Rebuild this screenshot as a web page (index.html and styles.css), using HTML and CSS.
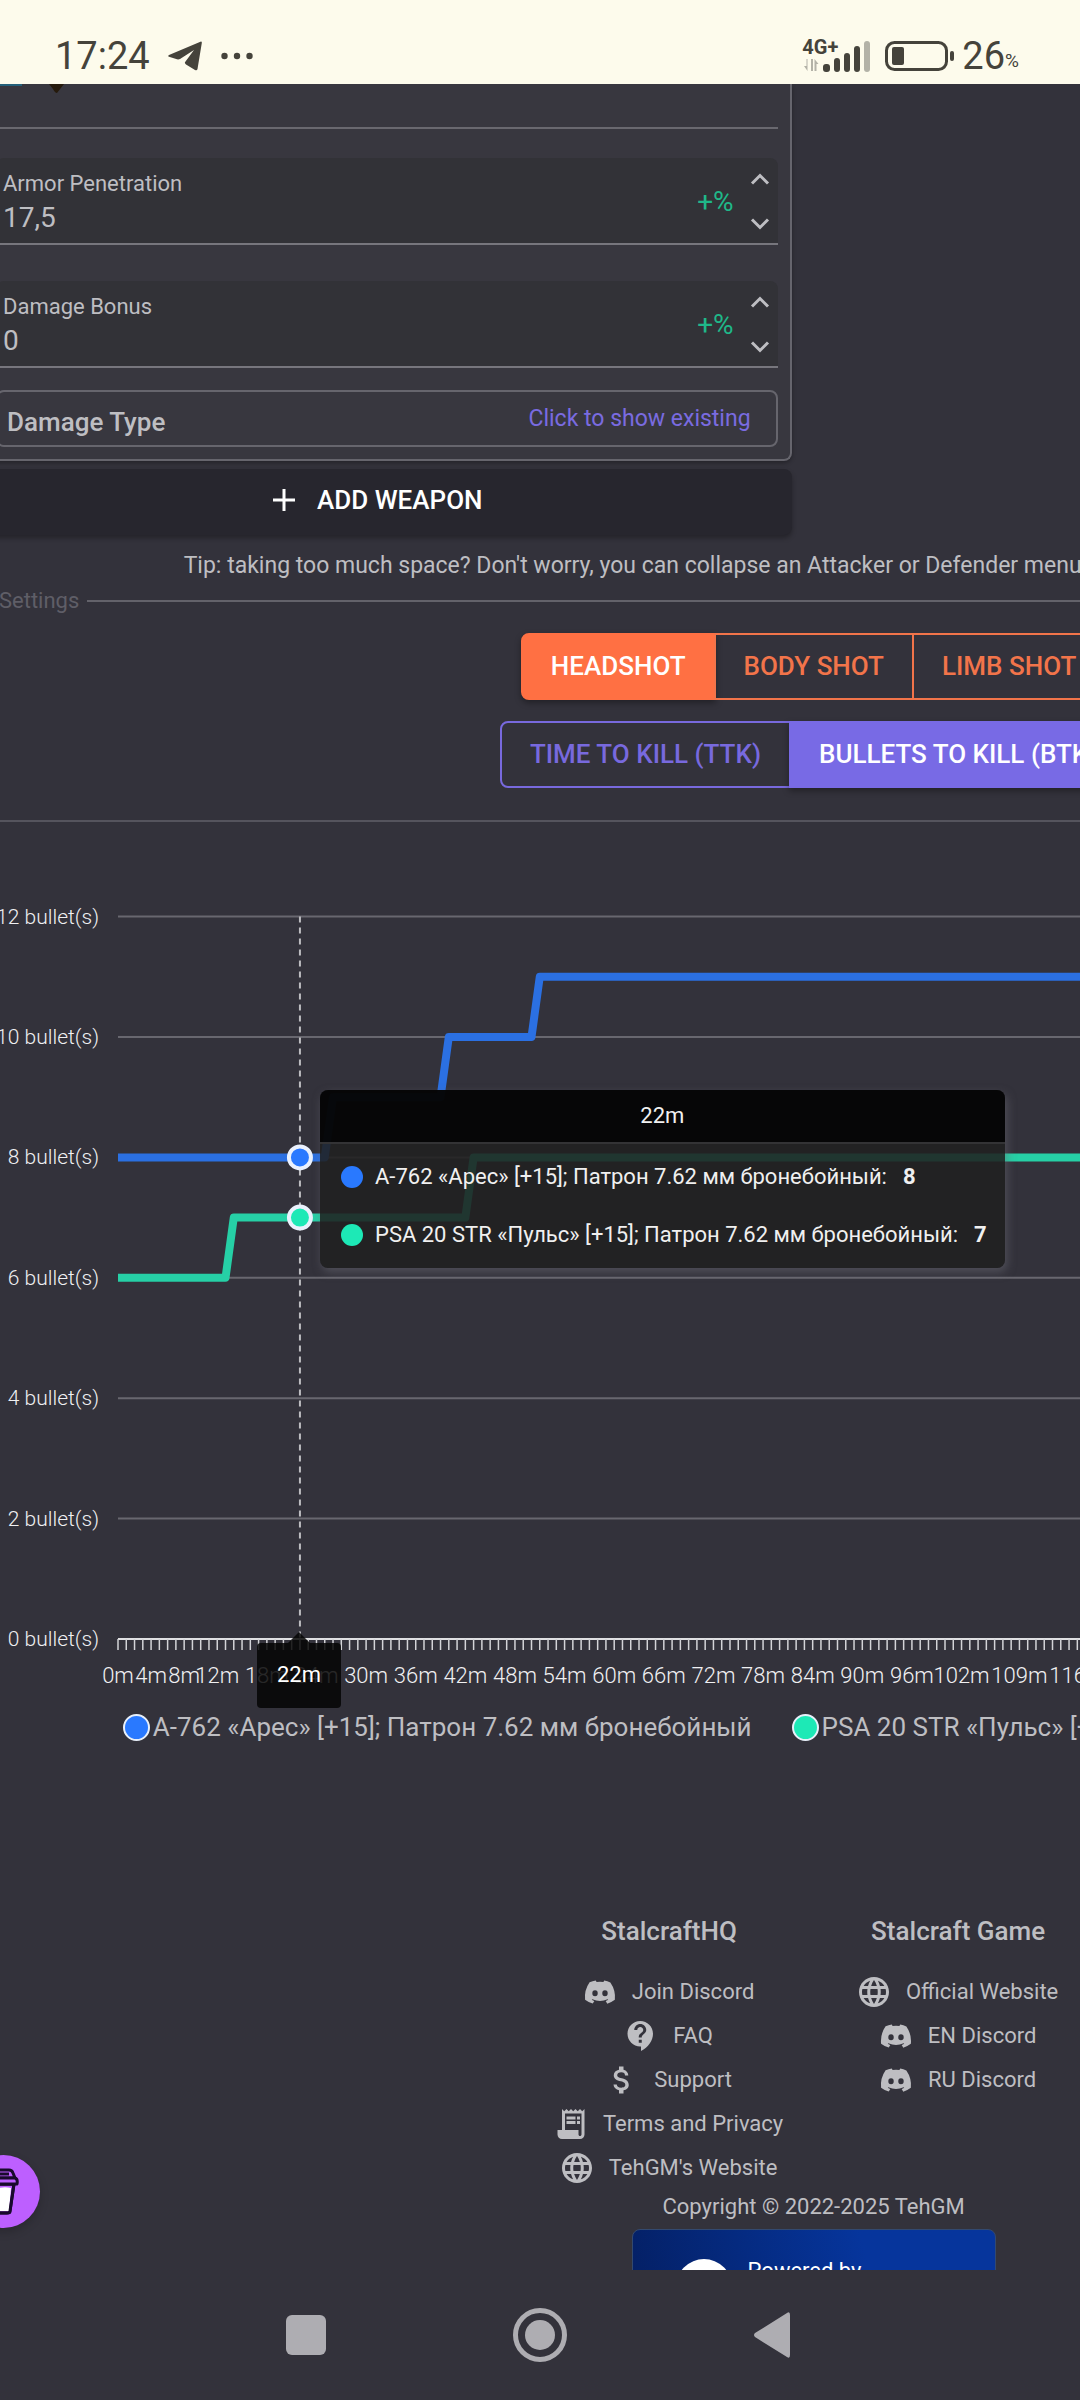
FILE: index.html
```
<!DOCTYPE html>
<html lang="en">
  <head>
    <meta charset="UTF-8">
    <meta name="viewport" content="width=device-width, initial-scale=1.0">
    <title>StalcraftHQ - Weapon Calculator</title>
    <link rel="stylesheet" href="styles.css">
  </head>
  <body>
    <!-- icon sprites -->
    <svg width="0" height="0" class="sprites">
      <symbol id="discord" viewBox="0 0 24 24"><path d="M14.82 4.26a10.14 10.14 0 0 0-.53 1.1 14.66 14.66 0 0 0-4.58 0 10.14 10.14 0 0 0-.53-1.1 16 16 0 0 0-4.13 1.3 17.33 17.33 0 0 0-3 11.59 16.6 16.6 0 0 0 5.07 2.59A12.89 12.89 0 0 0 8.23 18a9.65 9.65 0 0 1-1.71-.83 3.39 3.39 0 0 0 .42-.33 11.66 11.66 0 0 0 10.12 0q.21.18.42.33a10.84 10.84 0 0 1-1.71.84 12.41 12.41 0 0 0 1.08 1.78 16.44 16.44 0 0 0 5.06-2.59 17.22 17.22 0 0 0-3-11.59 16.09 16.09 0 0 0-4.09-1.35zM8.68 14.81a1.94 1.94 0 0 1-1.8-2 1.93 1.93 0 0 1 1.8-2 1.93 1.93 0 0 1 1.8 2 1.93 1.93 0 0 1-1.8 2zm6.64 0a1.94 1.94 0 0 1-1.8-2 1.93 1.93 0 0 1 1.8-2 1.92 1.92 0 0 1 1.8 2 1.92 1.92 0 0 1-1.8 2z"/></symbol>
      <symbol id="globe" viewBox="0 0 24 24"><path d="M11.99 2C6.47 2 2 6.48 2 12s4.47 10 9.99 10C17.52 22 22 17.52 22 12S17.52 2 11.99 2zm6.93 6h-2.95c-.32-1.25-.78-2.45-1.38-3.56 1.84.63 3.37 1.91 4.33 3.56zM12 4.04c.83 1.2 1.48 2.53 1.91 3.96h-3.82c.43-1.43 1.08-2.76 1.91-3.96zM4.26 14C4.1 13.36 4 12.69 4 12s.1-1.36.26-2h3.38c-.08.66-.14 1.32-.14 2s.06 1.34.14 2H4.26zm.82 2h2.95c.32 1.25.78 2.45 1.38 3.56-1.84-.63-3.37-1.9-4.33-3.56zm2.95-8H5.08c.96-1.66 2.49-2.93 4.33-3.56C8.81 5.55 8.35 6.75 8.03 8zM12 19.96c-.83-1.2-1.48-2.53-1.91-3.96h3.82c-.43 1.43-1.08 2.76-1.91 3.96zM14.34 14H9.66c-.09-.66-.16-1.32-.16-2s.07-1.35.16-2h4.68c.09.65.16 1.32.16 2s-.07 1.34-.16 2zm.25 5.56c.6-1.11 1.06-2.31 1.38-3.56h2.95c-.96 1.65-2.49 2.93-4.33 3.56zM16.36 14c.08-.66.14-1.32.14-2s-.06-1.34-.14-2h3.38c.16.64.26 1.31.26 2s-.1 1.36-.26 2h-3.38z"/></symbol>
      <symbol id="faq" viewBox="0 0 24 24"><path d="M11.5 2C6.81 2 3 5.81 3 10.5S6.81 19 11.5 19h.5v3c4.86-2.34 8-7 8-11.5C20 5.81 16.19 2 11.5 2zm1 14.5h-2v-2h2v2zm0-3.5h-2c0-3.25 3-3 3-5 0-1.1-.9-2-2-2s-2 .9-2 2h-2c0-2.21 1.79-4 4-4s4 1.79 4 4c0 2.5-3 2.75-3 5z"/></symbol>
      <symbol id="money" viewBox="0 0 24 24"><path d="M11.8 10.9c-2.27-.59-3-1.2-3-2.15 0-1.09 1.01-1.85 2.7-1.85 1.78 0 2.44.85 2.5 2.1h2.21c-.07-1.72-1.12-3.3-3.21-3.81V3h-3v2.16c-1.94.42-3.5 1.68-3.5 3.61 0 2.31 1.91 3.46 4.7 4.13 2.5.6 3 1.48 3 2.41 0 .69-.49 1.79-2.7 1.79-2.06 0-2.87-.92-2.98-2.1h-2.2c.12 2.19 1.76 3.42 3.68 3.83V21h3v-2.15c1.95-.37 3.5-1.5 3.5-3.55 0-2.84-2.43-3.81-4.7-4.4z"/></symbol>
      <symbol id="receipt" viewBox="0 0 24 24"><path d="M19.5 3.5L18 2l-1.5 1.5L15 2l-1.5 1.5L12 2l-1.5 1.5L9 2 7.5 3.5 6 2v14H3v3c0 1.66 1.34 3 3 3h12c1.66 0 3-1.34 3-3V2l-1.5 1.5zM19 19c0 .55-.45 1-1 1s-1-.45-1-1v-3H8V5h11v14zM9 7h6v2H9zM16 7h2v2h-2zM9 10h6v2H9zM16 10h2v2h-2z"/></symbol>
      <symbol id="up" viewBox="0 0 20 12"><path d="M2 10.500L10 2.500L18 10.500" fill="none" stroke="currentColor" stroke-width="3"/></symbol>
      <symbol id="down" viewBox="0 0 20 12"><path d="M2 1.500L10 9.500L18 1.500" fill="none" stroke="currentColor" stroke-width="3"/></symbol>
    </svg>

    <!-- phone status bar -->
    <header class="statusbar">
      <span class="clock">17:24</span>
      <svg class="plane" width="34" height="30" viewBox="0 0 34 30"><path d="M33 0.500Q34 0.500 33.800 2L29.500 28Q29 30 27 29L18 23.500Q16 22 17.500 20.500L26 9L12 18Q10.500 18.700 9 18.300L1 15.700Q-0.500 15 1 14Z"/></svg>
      <svg class="dots" width="32" height="8" viewBox="0 0 32 8"><circle cx="3.500" cy="4" r="3.200"/><circle cx="16" cy="4" r="3.200"/><circle cx="28.500" cy="4" r="3.200"/></svg>
      <div class="signal">
        <span class="net">4G+</span>
        <svg width="68" height="34" viewBox="0 0 68 34">
          <g fill="#b3b2a7"><path d="M5.500 20v12L2 27h2.500v-7zM9 20h2v12h-2zM12.500 32V20l4 5h-2v7z"/><rect x="62" y="2" width="6" height="31" rx="3"/></g>
          <rect x="21" y="25" width="7" height="8" rx="3"/><rect x="32" y="19" width="6" height="14" rx="3"/><rect x="42" y="14" width="6" height="19" rx="3"/><rect x="52" y="7" width="6" height="26" rx="3"/>
        </svg>
      </div>
      <svg class="battery" width="70" height="30" viewBox="0 0 70 30"><rect x="1.500" y="1.500" width="60" height="27" rx="8" fill="none" stroke="#45433b" stroke-width="3"/><rect x="7" y="6" width="12" height="18" rx="2"/><rect x="65" y="10" width="4" height="10" rx="2"/></svg>
      <span class="clock">26</span><span class="percent">%</span>
    </header>

    <main class="viewport">
      <div class="page">
        <section class="columns">
          <div class="attacker">
            <div class="card">
              <div class="ammo">
                <svg width="80" height="10" viewBox="0 0 80 10"><path d="M0 0H26V2H0z" fill="#24607a"/><path d="M53 0H68L61 9Q59 9 57 5z" fill="#261a0c"/></svg>
              </div>
              <div class="field">
                <div class="field-text">
                  <label for="pen">Armor Penetration</label>
                  <input type="text" id="pen" value="17,5">
                </div>
                <span class="suffix">+%</span>
                <div class="spin">
                  <button aria-label="Increase"><svg width="20" height="12"><use href="#up"/></svg></button>
                  <button aria-label="Decrease"><svg width="20" height="12"><use href="#down"/></svg></button>
                </div>
              </div>
              <div class="field">
                <div class="field-text">
                  <label for="bonus">Damage Bonus</label>
                  <input type="text" id="bonus" value="0">
                </div>
                <span class="suffix">+%</span>
                <div class="spin">
                  <button aria-label="Increase"><svg width="20" height="12"><use href="#up"/></svg></button>
                  <button aria-label="Decrease"><svg width="20" height="12"><use href="#down"/></svg></button>
                </div>
              </div>
              <div class="damage-type">
                <span class="damage-title">Damage Type</span>
                <a href="#existing">Click to show existing</a>
              </div>
            </div>
            <button class="add">
              <svg width="22" height="22" viewBox="0 0 22 22"><path d="M11 0V22M0 11H22" stroke="#fff" stroke-width="3"/></svg>
              ADD WEAPON
            </button>
          </div>
        </section>

        <p class="tip">Tip: taking too much space? Don't worry, you can collapse an Attacker or Defender menu by clicking on the arrow in its label!</p>
        <div class="settings-title"><span>Settings</span></div>

        <div class="toggle orange">
          <button class="active">HEADSHOT</button>
          <button>BODY SHOT</button>
          <button>LIMB SHOT</button>
        </div>
        <div class="toggle purple">
          <button>TIME TO KILL (TTK)</button>
          <button class="active">BULLETS TO KILL (BTK)</button>
        </div>

        <hr class="divider">

        <div class="chart">
          <svg id="plot" width="100%" height="889"></svg>
          <div class="axis-pointer">22m</div>
          <div class="tooltip">
            <div class="tooltip-head">22m</div>
            <div class="tooltip-row"><i class="dot blue"></i>А-762 «Арес» [+15]; Патрон 7.62 мм бронебойный: <b>8</b></div>
            <div class="tooltip-row"><i class="dot green"></i>PSA 20 STR «Пульс» [+15]; Патрон 7.62 мм бронебойный: <b>7</b></div>
          </div>
        </div>
        <ul class="legend">
          <li><i class="dot blue"></i>А-762 «Арес» [+15]; Патрон 7.62 мм бронебойный</li>
          <li><i class="dot green"></i>PSA 20 STR «Пульс» [+15]; Патрон 7.62 мм бронебойный</li>
        </ul>

        <footer class="footer">
          <div class="links">
            <div class="links-col">
              <h3>StalcraftHQ</h3>
              <a href="#"><svg class="icon"><use href="#discord"/></svg>Join Discord</a>
              <a href="#"><svg class="icon"><use href="#faq"/></svg>FAQ</a>
              <a href="#"><svg class="icon"><use href="#money"/></svg>Support</a>
              <a href="#"><svg class="icon"><use href="#receipt"/></svg>Terms and Privacy</a>
              <a href="#"><svg class="icon"><use href="#globe"/></svg>TehGM's Website</a>
            </div>
            <div class="links-col">
              <h3>Stalcraft Game</h3>
              <a href="#"><svg class="icon"><use href="#globe"/></svg>Official Website</a>
              <a href="#"><svg class="icon"><use href="#discord"/></svg>EN Discord</a>
              <a href="#"><svg class="icon"><use href="#discord"/></svg>RU Discord</a>
            </div>
          </div>
          <p class="copyright">Copyright © 2022-2025 TehGM</p>
          <div class="powered">
            <svg width="56" height="56" viewBox="0 0 56 56"><circle cx="28" cy="28" r="28" fill="#fff"/><path d="M25 13Q28 10 31 13V30H25z" fill="#23395d"/></svg>
            <span>Powered by</span>
          </div>
        </footer>
      </div>

      <button class="coffee" aria-label="Buy me a coffee">
        <svg width="46" height="48" viewBox="0 0 46 48" stroke="#180a2c" stroke-width="3" stroke-linejoin="round">
          <path d="M8 16L12 43Q12 45 15 45H31Q34 45 34 43L38 16z" fill="#bd5fff"/>
          <path d="M10 26Q23 17 35 20L33 43H13z" fill="#fff" stroke="none"/>
          <path d="M8 16L12 43Q12 45 15 45H31Q34 45 34 43L38 16z" fill="none"/>
          <path d="M7 10L9 4Q10 2 12 2H33Q36 2 37 5L39 10z" fill="#bd5fff"/>
          <path d="M5 10H39Q42 11 41 16H5z" fill="#bd5fff"/>
          <path d="M14 6H33" />
        </svg>
      </button>
    </main>

    <nav class="navbar">
      <button aria-label="Recent"><svg width="40" height="40" viewBox="0 0 40 40"><rect width="40" height="40" rx="6"/></svg></button>
      <button aria-label="Home"><svg width="54" height="54" viewBox="0 0 54 54"><circle cx="27" cy="27" r="24.500" fill="none" stroke="#aeadb2" stroke-width="5"/><circle cx="27" cy="27" r="15"/></svg></button>
      <button aria-label="Back"><svg width="38" height="46" viewBox="0 0 38 46"><path d="M34 1Q37 -1 37 3V43Q37 47 34 45L2 25Q0 23 2 21z"/></svg></button>
    </nav>

    <script src="script.js"></script>
  </body>
</html>
```

FILE: styles.css
```
* {
  box-sizing: border-box;
}
body {
  margin: 0;
  height: 100vh;
  display: flex;
  flex-direction: column;
  overflow: hidden;
  background-color: #33323b;
  color: #bebec2;
  font-family: Roboto, "Liberation Sans", sans-serif;
  font-size: 22px;
  line-height: 32px;
}
button, input {
  font: inherit;
  color: inherit;
  background: none;
  border: 0;
  padding: 0;
  margin: 0;
}
button {
  cursor: pointer;
}
a {
  color: inherit;
  text-decoration: none;
}
svg {
  display: block;
  fill: currentColor;
}
.sprites {
  position: absolute;
}

/* status bar */
.statusbar {
  flex: none;
  height: 84px;
  padding: 27px 61px 0 55px;
  display: flex;
  align-items: center;
  background-color: #fdfbec;
  color: #45433b;
}
.clock {
  font-size: 38px;
}
.plane {
  margin-left: 18px;
}
.dots {
  margin-left: 19px;
}
.signal {
  position: relative;
  margin-left: auto;
}
.net {
  position: absolute;
  top: -8px;
  left: 0;
  font-size: 20px;
  font-weight: 700;
}
.battery {
  margin: 0 7px 0 15px;
}
.percent {
  font-size: 19px;
  padding-top: 10px;
}

/* scrolled page */
.viewport {
  flex: 1;
  min-height: 0;
  position: relative;
  overflow: hidden;
}
.page {
  width: 154%;
  margin-left: -18px;
}
.columns {
  display: grid;
  grid-template-columns: 1fr 1fr;
  gap: 44px;
}
.card {
  border: 2px solid #66656d;
  border-top: 0;
  border-radius: 0 0 8px 8px;
  padding: 0 12px 12px;
  background-color: #38373f;
  box-shadow: 0 2px 4px rgba(0, 0, 0, 0.3);
}
.ammo {
  height: 45px;
  border-bottom: 2px solid #69686f;
}
.field {
  display: flex;
  height: 87px;
  margin-top: 29px;
  padding: 0 8px 0 7px;
  background-color: #323237;
  border-bottom: 2px solid #77767d;
  border-radius: 8px 8px 0 0;
}
.field + .field {
  margin-top: 36px;
}
.field-text {
  flex: 1;
  padding-top: 10px;
}
.field-text label {
  display: block;
}
.field-text input {
  display: block;
  width: 100%;
  height: 34px;
  font-size: 28px;
}
.suffix {
  padding: 28px 16px 0 0;
  color: #1fb889;
  font-size: 28px;
}
.spin {
  display: flex;
  flex-direction: column;
  justify-content: space-between;
  padding: 15px 0 13px;
}
.damage-type {
  display: flex;
  justify-content: space-between;
  align-items: center;
  height: 57px;
  margin-top: 22px;
  padding: 0 25px 0 9px;
  border: 2px solid #66656d;
  border-radius: 8px;
}
.damage-title {
  font-size: 26px;
  font-weight: 500;
  padding-top: 6px;
}
.damage-type a {
  font-size: 23px;
  color: #7a6be0;
}
.add {
  display: flex;
  justify-content: center;
  align-items: center;
  gap: 22px;
  width: 100%;
  height: 66px;
  margin-top: 8px;
  padding: 0 18px 4px 0;
  border-radius: 8px;
  background-color: #27262e;
  color: #fff;
  font-size: 26px;
  font-weight: 500;
  box-shadow: 0 3px 5px rgba(0, 0, 0, 0.3);
}
.tip {
  margin: 15px 0 0;
  font-size: 23px;
  text-align: center;
  white-space: nowrap;
}
.settings-title {
  display: flex;
  align-items: center;
  gap: 8px;
  margin: 3px 0 16px;
  padding-left: 17px;
  color: #5f5e67;
}
.settings-title::after {
  content: "";
  flex: 1;
  height: 2px;
  background-color: #63626a;
}

/* toggle groups */
.toggle {
  display: flex;
  justify-content: center;
}
.toggle button {
  height: 67px;
  padding: 0 28px 2px;
  border: 2px solid;
  font-size: 26px;
  font-weight: 500;
}
.toggle button + button {
  margin-left: -2px;
}
.toggle button:first-child {
  border-radius: 8px 0 0 8px;
}
.toggle button:last-child {
  border-radius: 0 8px 8px 0;
}
.toggle .active {
  box-shadow: 0 3px 6px rgba(0, 0, 0, 0.35);
}
.orange {
  color: #f2744a;
}
.orange .active {
  background-color: #ff7043;
  border-color: #ff7043;
  color: #fff;
}
.purple {
  margin-top: 21px;
  color: #7869de;
}
.purple .active {
  background-color: #786ae5;
  border-color: #786ae5;
  color: #fff;
}
.divider {
  margin: 32px 0 0;
  border: 0;
  height: 2px;
  background-color: #55545d;
}

/* chart */
.chart {
  position: relative;
}
#plot text {
  fill: #f0f0f2;
  font-size: 22px;
  font-weight: 300;
}
#plot .y-label {
  font-size: 21px;
}
.axis-pointer {
  position: absolute;
  left: 275px;
  top: 821px;
  width: 84px;
  height: 65px;
  padding-top: 16px;
  border-radius: 4px;
  background-color: rgba(5, 5, 5, 0.85);
  color: #fff;
  text-align: center;
}
.axis-pointer::before {
  content: "";
  position: absolute;
  left: 31px;
  top: -11px;
  border: solid transparent;
  border-width: 0 11px 11px;
  border-bottom-color: rgba(5, 5, 5, 0.85);
}
.tooltip {
  position: absolute;
  left: 338px;
  top: 268px;
  height: 178px;
  border-radius: 8px;
  overflow: hidden;
  background-color: rgba(32, 32, 32, 0.88);
  color: #f0f0f0;
  box-shadow: 2px 4px 10px rgba(110, 110, 120, 0.5);
  white-space: nowrap;
}
.tooltip-head {
  height: 54px;
  padding-top: 10px;
  margin-bottom: 4px;
  background-color: rgba(0, 0, 0, 0.8);
  border-bottom: 2px solid #333335;
  text-align: center;
}
.tooltip-row {
  display: flex;
  align-items: center;
  height: 58px;
  padding: 0 18px 0 21px;
}
.tooltip-row .dot {
  width: 22px;
  height: 22px;
  margin-right: 12px;
}
.tooltip-row b {
  margin-left: 16px;
}
.dot {
  flex: none;
  border-radius: 50%;
}
.blue {
  background-color: #2979ff;
}
.green {
  background-color: #1de9b6;
}
.legend {
  display: flex;
  justify-content: center;
  gap: 40px;
  margin: 0;
  padding: 0;
  list-style: none;
  font-size: 26px;
  white-space: nowrap;
}
.legend li {
  display: flex;
  align-items: center;
  gap: 3px;
}
.legend .dot {
  width: 27px;
  height: 27px;
  border: 2px solid #e8f0fa;
}

/* footer */
.footer {
  padding-top: 172px;
  display: flex;
  flex-direction: column;
  align-items: center;
}
.links {
  display: grid;
  grid-template-columns: 289px 289px;
}
.links-col {
  display: flex;
  flex-direction: column;
  align-items: center;
}
.links-col h3 {
  margin: 0 0 23px;
  font-size: 26px;
  font-weight: 500;
}
.links-col a {
  display: flex;
  align-items: center;
  gap: 14px;
  height: 44px;
  padding-right: 2px;
  white-space: nowrap;
}
.icon {
  width: 36px;
  height: 36px;
}
.copyright {
  margin: 1px 0 6px;
}
.powered {
  display: flex;
  gap: 16px;
  width: 364px;
  height: 100px;
  padding: 29px 0 0 43px;
  border: 1px solid #33496f;
  border-radius: 8px;
  background: linear-gradient(75deg, #041f63, #06359c 65%);
  color: #fff;
  line-height: 24px;
}
.coffee {
  position: absolute;
  left: -33px;
  bottom: 42px;
  width: 73px;
  height: 73px;
  padding-left: 9px;
  border-radius: 50%;
  background-color: #bd5fff;
  box-shadow: 0 4px 10px rgba(0, 0, 0, 0.2);
}

/* android buttons */
.navbar {
  flex: none;
  height: 130px;
  padding: 0 289px 0 286px;
  display: flex;
  justify-content: space-between;
  align-items: center;
  color: #aeadb2;
}
```

FILE: script.js
```
const plot = document.getElementById('plot');
const left = 136;     // x of 0m
const step = 8.27;    // width of one metre
const bottom = 817;   // y of 0 bullets
const bullet = 60.2;  // height of one bullet
const maxRange = 170;

const x = (m) => left + m * step;
const y = (b) => bottom - b * bullet;

function add(tag, attrs, text) {
  const el = document.createElementNS('http://www.w3.org/2000/svg', tag);
  for (const name in attrs) {
    el.setAttribute(name, attrs[name]);
  }
  if (text) {
    el.textContent = text;
  }
  plot.appendChild(el);
}

// y axis labels and grid
for (let b = 0; b <= 12; b += 2) {
  add('text', { class: 'y-label', x: 117, y: y(b) + 7, 'text-anchor': 'end' }, b + ' bullet(s)');
  if (b > 0) {
    add('path', { d: `M${left} ${y(b)}H${x(maxRange)}`, stroke: '#68676f', 'stroke-width': 2 });
  }
}

// x axis
add('path', { d: `M${left} ${bottom}H${x(maxRange)}`, stroke: '#e0e0e2', 'stroke-width': 2 });
for (let m = 0; m <= maxRange; m++) {
  add('path', { d: `M${x(m)} ${bottom}v11`, stroke: '#d4d4d8', 'stroke-width': 1.5 });
}
const marks = [0, 4, 8, 12, 18, 24, 30, 36, 42, 48, 54, 60, 66, 72, 78, 84, 90, 96, 102, 109, 116, 123];
for (const m of marks) {
  add('text', { x: x(m), y: bottom + 44, 'text-anchor': 'middle' }, m + 'm');
}

// series as [metre, bullets]
function line(points, color) {
  const d = points.map((p) => x(p[0]) + ' ' + y(p[1])).join('L');
  add('path', { d: 'M' + d, fill: 'none', stroke: color, 'stroke-width': 8, 'stroke-linejoin': 'round' });
}
line([[0, 8], [25, 8], [26, 9], [39, 9], [40, 10], [50, 10], [51, 11], [maxRange, 11]], '#2b70e2');
line([[0, 6], [13, 6], [14, 7], [42, 7], [43, 8], [maxRange, 8]], '#26d0a6');

// hovered distance
add('path', { d: `M${x(22)} ${y(12)}V${bottom}`, stroke: '#bdbdc1', 'stroke-width': 2, 'stroke-dasharray': '6 5' });
add('circle', { cx: x(22), cy: y(8), r: 11, fill: '#2979ff', stroke: '#eaf1fd', 'stroke-width': 4 });
add('circle', { cx: x(22), cy: y(7), r: 11, fill: '#1de9b6', stroke: '#eaf1fd', 'stroke-width': 4 });
```
